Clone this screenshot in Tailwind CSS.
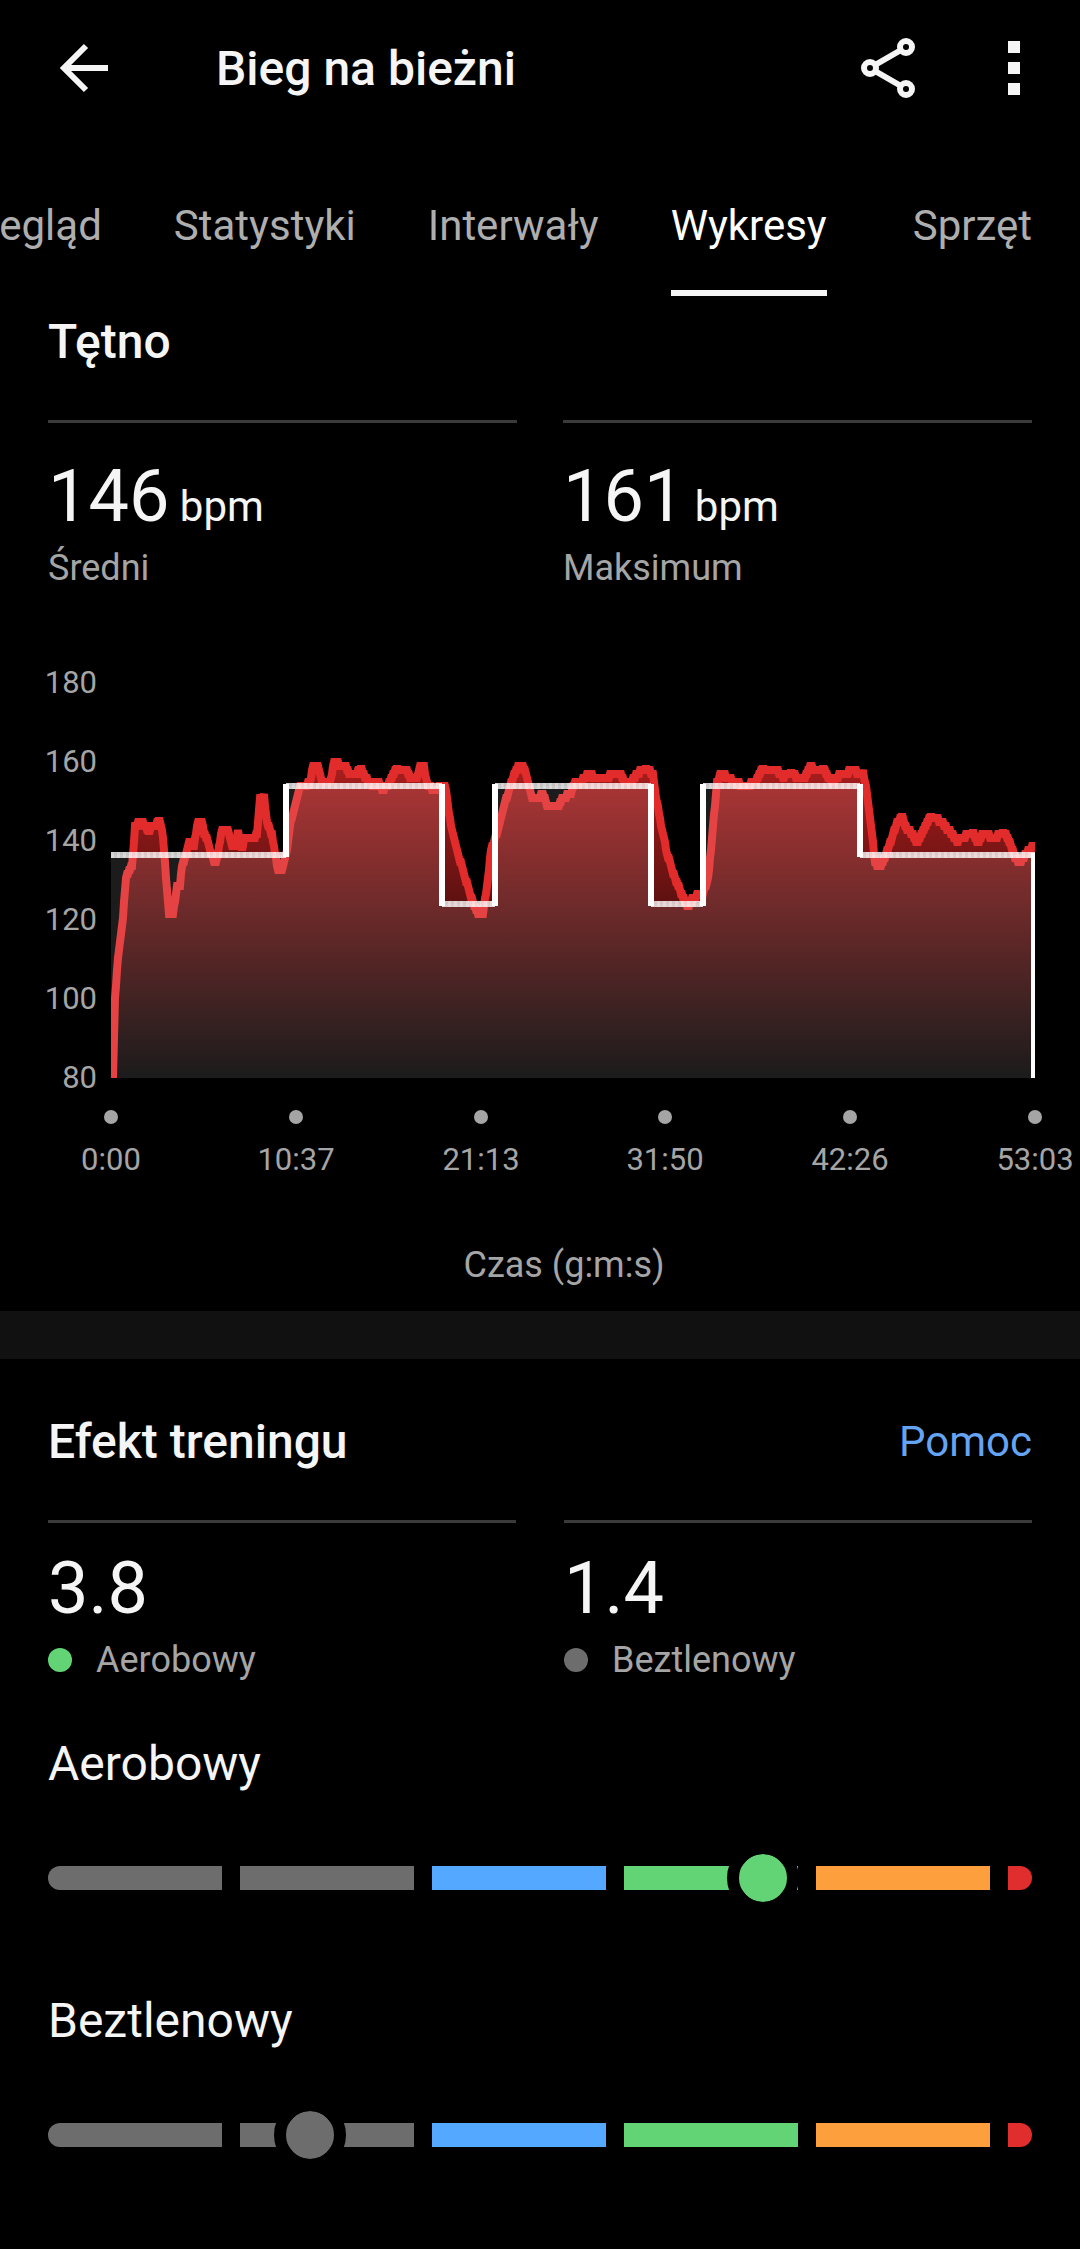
<!DOCTYPE html>
<html lang="pl">
<head>
  <meta charset="UTF-8" />
  <meta name="viewport" content="width=device-width, initial-scale=1.0" />
  <title>Bieg na bieżni</title>
  <script src="https://cdn.jsdelivr.net/npm/@tailwindcss/browser@4"></script>
</head>
<body class="bg-black text-[#f5f5f5] font-[Roboto,sans-serif] min-h-screen overflow-x-hidden">
  <header class="flex items-center h-[138px] pl-12 pr-9">
    <button type="button" aria-label="Wstecz" class="shrink-0 mr-24">
      <svg class="size-[72px]" viewBox="0 0 72 72" fill="none" stroke="#f5f5f5" stroke-width="6">
        <path d="M60 35H16M38 13L16 35l22 22" />
      </svg>
    </button>
    <h1 class="flex-1 text-[48px] leading-[56px] font-medium">Bieg na bieżni</h1>
    <button type="button" aria-label="Udostępnij" class="shrink-0 mr-[60px]">
      <svg class="size-[72px]" viewBox="0 0 72 72" fill="none" stroke="#f5f5f5" stroke-width="6">
        <path d="M23 32l26-15M23 38l26 15" />
        <circle cx="18" cy="35" r="6" />
        <circle cx="54" cy="14" r="6" />
        <circle cx="54" cy="56" r="6" />
      </svg>
    </button>
    <button type="button" aria-label="Więcej opcji" class="shrink-0">
      <svg class="w-[60px] h-[72px]" viewBox="0 0 60 72" fill="#f5f5f5">
        <path d="M24 8h12v12H24zM24 29h12v12H24zM24 50h12v12H24z" />
      </svg>
    </button>
  </header>

  <nav class="flex justify-end gap-[72px] pt-16 pr-12 text-[42px] leading-[48px] text-[#aeaeae] whitespace-nowrap overflow-hidden">
    <a href="#" class="pb-10 border-b-[6px] border-transparent">Przegląd</a>
    <a href="#" class="pb-10 border-b-[6px] border-transparent">Statystyki</a>
    <a href="#" class="pb-10 border-b-[6px] border-transparent">Interwały</a>
    <a href="#" aria-current="page" class="pb-10 border-b-[6px] border-[#f5f5f5] text-white">Wykresy</a>
    <a href="#" class="pb-10 border-b-[6px] border-transparent pl-3.5">Sprzęt</a>
  </nav>

  <main>
    <section class="pt-[18px] pb-[25px]">
      <h2 class="px-12 text-[48px] leading-[56px] font-medium">Tętno</h2>
      <div class="grid grid-cols-2 gap-[46px] px-12 mt-[50px]">
        <div class="border-t-[3px] border-[#3a3a3a] pt-8">
          <p class="text-[72px] leading-[84px]">146<span class="text-[42px] leading-none"> bpm</span></p>
          <p class="mt-2 text-[36px] leading-[42px] text-[#a5a5a5]">Średni</p>
        </div>
        <div class="border-t-[3px] border-[#3a3a3a] pt-8">
          <p class="text-[72px] leading-[84px]">161<span class="text-[42px] leading-none"> bpm</span></p>
          <p class="mt-2 text-[36px] leading-[42px] text-[#a5a5a5]">Maksimum</p>
        </div>
      </div>

      <svg class="block w-full mt-[51px]" viewBox="0 0 1080 560" role="img" aria-label="Wykres tętna">
        <defs>
          <linearGradient id="hr-fill" gradientUnits="userSpaceOnUse" x1="0" y1="125" x2="0" y2="438">
            <stop offset="0" stop-color="#e52828" stop-opacity="0.74" />
            <stop offset="1" stop-color="#e52828" stop-opacity="0" />
          </linearGradient>
          <clipPath id="plot"><rect x="111" y="0" width="924" height="438" /></clipPath>
        </defs>
        <g fill="#a5a5a5" font-size="31" text-anchor="end">
          <text x="97" y="53">180</text>
          <text x="97" y="132">160</text>
          <text x="97" y="211">140</text>
          <text x="97" y="290">120</text>
          <text x="97" y="369">100</text>
          <text x="97" y="448">80</text>
        </g>
        <g clip-path="url(#plot)" fill="none">
          <path id="hr-area" fill="url(#hr-fill)" />
          <path id="hr-line" stroke="#e22c2c" stroke-width="8" />
          <!-- target zone -->
          <path fill="#fff" fill-opacity="0.11" d="M111 438V215H286V146H442V264H495V146H651V264H703V146H860V215H1033V438z" />
          <g stroke="#fff" stroke-width="6">
            <path stroke-opacity="0.76" d="M111 215H286M286 146H442M442 264H495M495 146H651M651 264H703M703 146H860M860 215H1035" />
            <path stroke-opacity="0.3" stroke-dasharray="3 3" d="M111 215H286M286 146H442M442 264H495M495 146H651M651 264H703M703 146H860M860 215H1035" />
            <path d="M286 217V144M442 144V266M495 266V144M651 144V266M703 266V144M860 144V217M1034 213V438" />
          </g>
        </g>
        <g fill="#a5a5a5">
          <circle cx="111" cy="477" r="7" />
          <circle cx="296" cy="477" r="7" />
          <circle cx="481" cy="477" r="7" />
          <circle cx="665" cy="477" r="7" />
          <circle cx="850" cy="477" r="7" />
          <circle cx="1035" cy="477" r="7" />
        </g>
        <g fill="#a5a5a5" font-size="31" text-anchor="middle">
          <text x="111" y="530">0:00</text>
          <text x="296" y="530">10:37</text>
          <text x="481" y="530">21:13</text>
          <text x="665" y="530">31:50</text>
          <text x="850" y="530">42:26</text>
          <text x="1035" y="530">53:03</text>
        </g>
      </svg>
      <p class="mt-11 pl-12 text-center text-[36px] leading-[42px] text-[#a5a5a5]">Czas (g:m:s)</p>
    </section>

    <div class="h-12 bg-[#111111]"></div>

    <section class="px-12 pt-[55px] pb-[102px]">
      <div class="flex items-center justify-between">
        <h2 class="text-[48px] leading-[56px] font-medium">Efekt treningu</h2>
        <a href="#" class="text-[42px] leading-[48px] text-[#64a4f2]">Pomoc</a>
      </div>
      <div class="grid grid-cols-2 gap-12 mt-[50px]">
        <div class="border-t-[3px] border-[#3a3a3a] pt-6">
          <p class="text-[72px] leading-[84px]">3.8</p>
          <p class="flex items-center gap-6 mt-2 text-[36px] leading-[42px] text-[#a5a5a5]"><span class="size-6 rounded-full bg-[#62d476]"></span>Aerobowy</p>
        </div>
        <div class="border-t-[3px] border-[#3a3a3a] pt-6">
          <p class="text-[72px] leading-[84px]">1.4</p>
          <p class="flex items-center gap-6 mt-2 text-[36px] leading-[42px] text-[#a5a5a5]"><span class="size-6 rounded-full bg-[#6d6d6d]"></span>Beztlenowy</p>
        </div>
      </div>

      <h3 id="aerobic" class="mt-[55px] text-[48px] leading-[56px]">Aerobowy</h3>
      <div role="meter" aria-labelledby="aerobic" aria-valuemin="0" aria-valuemax="5" aria-valuenow="3.8" class="relative flex gap-[18px] h-6 mt-[74px]">
        <span class="flex-1 bg-[#6d6d6d] rounded-l-full"></span>
        <span class="flex-1 bg-[#6d6d6d]"></span>
        <span class="flex-1 bg-[#55a8ff]"></span>
        <span class="flex-1 bg-[#62d476]"></span>
        <span class="flex-1 bg-[#fd9f3c]"></span>
        <span class="w-6 bg-[#e02e2e] rounded-r-full"></span>
        <span class="absolute top-1/2 -translate-1/2 size-[72px] rounded-full border-[12px] border-black bg-[#62d476] bg-clip-padding" style="left: 72.7%"></span>
      </div>

      <h3 id="anaerobic" class="mt-[103px] text-[48px] leading-[56px]">Beztlenowy</h3>
      <div role="meter" aria-labelledby="anaerobic" aria-valuemin="0" aria-valuemax="5" aria-valuenow="1.4" class="relative flex gap-[18px] h-6 mt-[74px]">
        <span class="flex-1 bg-[#6d6d6d] rounded-l-full"></span>
        <span class="flex-1 bg-[#6d6d6d]"></span>
        <span class="flex-1 bg-[#55a8ff]"></span>
        <span class="flex-1 bg-[#62d476]"></span>
        <span class="flex-1 bg-[#fd9f3c]"></span>
        <span class="w-6 bg-[#e02e2e] rounded-r-full"></span>
        <span class="absolute top-1/2 -translate-1/2 size-[72px] rounded-full border-[12px] border-black bg-[#6d6d6d] bg-clip-padding" style="left: 26.6%"></span>
      </div>
    </section>
  </main>

  <script>
    // heart rate samples, plot coordinates
    const hr = [
      [113,438],[115,360],[118,317],[123,277],[126,237],[129,230],[132,227],[135,187],[138,184],[143,183],[146,188],[149,193],
      [152,185],[155,187],[159,180],[162,190],[164,210],[167,250],[169,273],[173,274],[177,247],[180,245],[182,227],[186,215],
      [189,203],[194,205],[198,181],[202,181],[204,195],[207,197],[211,213],[215,223],[218,215],[221,193],[224,189],[228,192],
      [232,208],[235,206],[238,192],[242,210],[244,200],[252,199],[257,195],[260,157],[264,156],[267,183],[272,195],[275,213],
      [278,230],[282,230],[287,210],[291,180],[297,157],[300,147],[310,143],[313,125],[318,125],[321,140],[330,143],[334,122],
      [337,121],[341,128],[346,128],[350,135],[357,133],[361,127],[365,138],[373,145],[378,142],[383,150],[390,142],[397,128],
      [406,129],[410,138],[416,140],[420,128],[424,128],[427,143],[435,152],[442,145],[445,145],[450,180],[455,203],[462,227],
      [468,247],[473,263],[478,273],[483,273],[487,247],[491,210],[498,190],[503,170],[508,153],[513,137],[518,127],[523,126],
      [527,138],[532,159],[537,158],[543,155],[547,165],[552,166],[557,168],[563,157],[570,155],[575,143],[583,140],[588,134],
      [594,137],[600,138],[607,137],[613,135],[619,133],[625,142],[633,140],[638,133],[646,128],[653,135],[656,157],[662,190],
      [667,213],[673,233],[680,250],[688,268],[692,260],[698,255],[703,253],[708,240],[713,187],[717,143],[721,133],[727,137],
      [735,142],[745,147],[757,140],[763,128],[771,132],[778,132],[783,137],[791,132],[798,139],[805,137],[810,127],[817,130],
      [823,128],[832,143],[840,135],[847,134],[852,129],[858,133],[863,132],[867,153],[872,193],[875,223],[880,227],[885,217],
      [890,203],[897,183],[902,176],[907,190],[912,193],[917,203],[923,190],[931,176],[937,179],[942,182],[950,192],[957,201],
      [967,195],[973,192],[978,203],[983,193],[989,196],[995,198],[1003,192],[1008,198],[1015,217],[1020,223],[1025,215],[1033,207],[1036,204]
    ];
    // the watch records whole beats only, so the curve climbs in small steps of 4px
    const steps = [];
    for (let i = 0; i < hr.length - 1; i++) {
      const [x1, y1] = hr[i], [x2, y2] = hr[i + 1];
      for (let x = x1; x < x2; x++) {
        const y = y1 + (y2 - y1) * (x - x1) / (x2 - x1);
        steps.push(x + " " + (438 - Math.round((438 - y) / 4) * 4));
      }
    }
    const line = "M" + steps.join("L");
    document.getElementById("hr-line").setAttribute("d", line);
    document.getElementById("hr-area").setAttribute("d", line + "V438H113z");
  </script>
</body>
</html>
